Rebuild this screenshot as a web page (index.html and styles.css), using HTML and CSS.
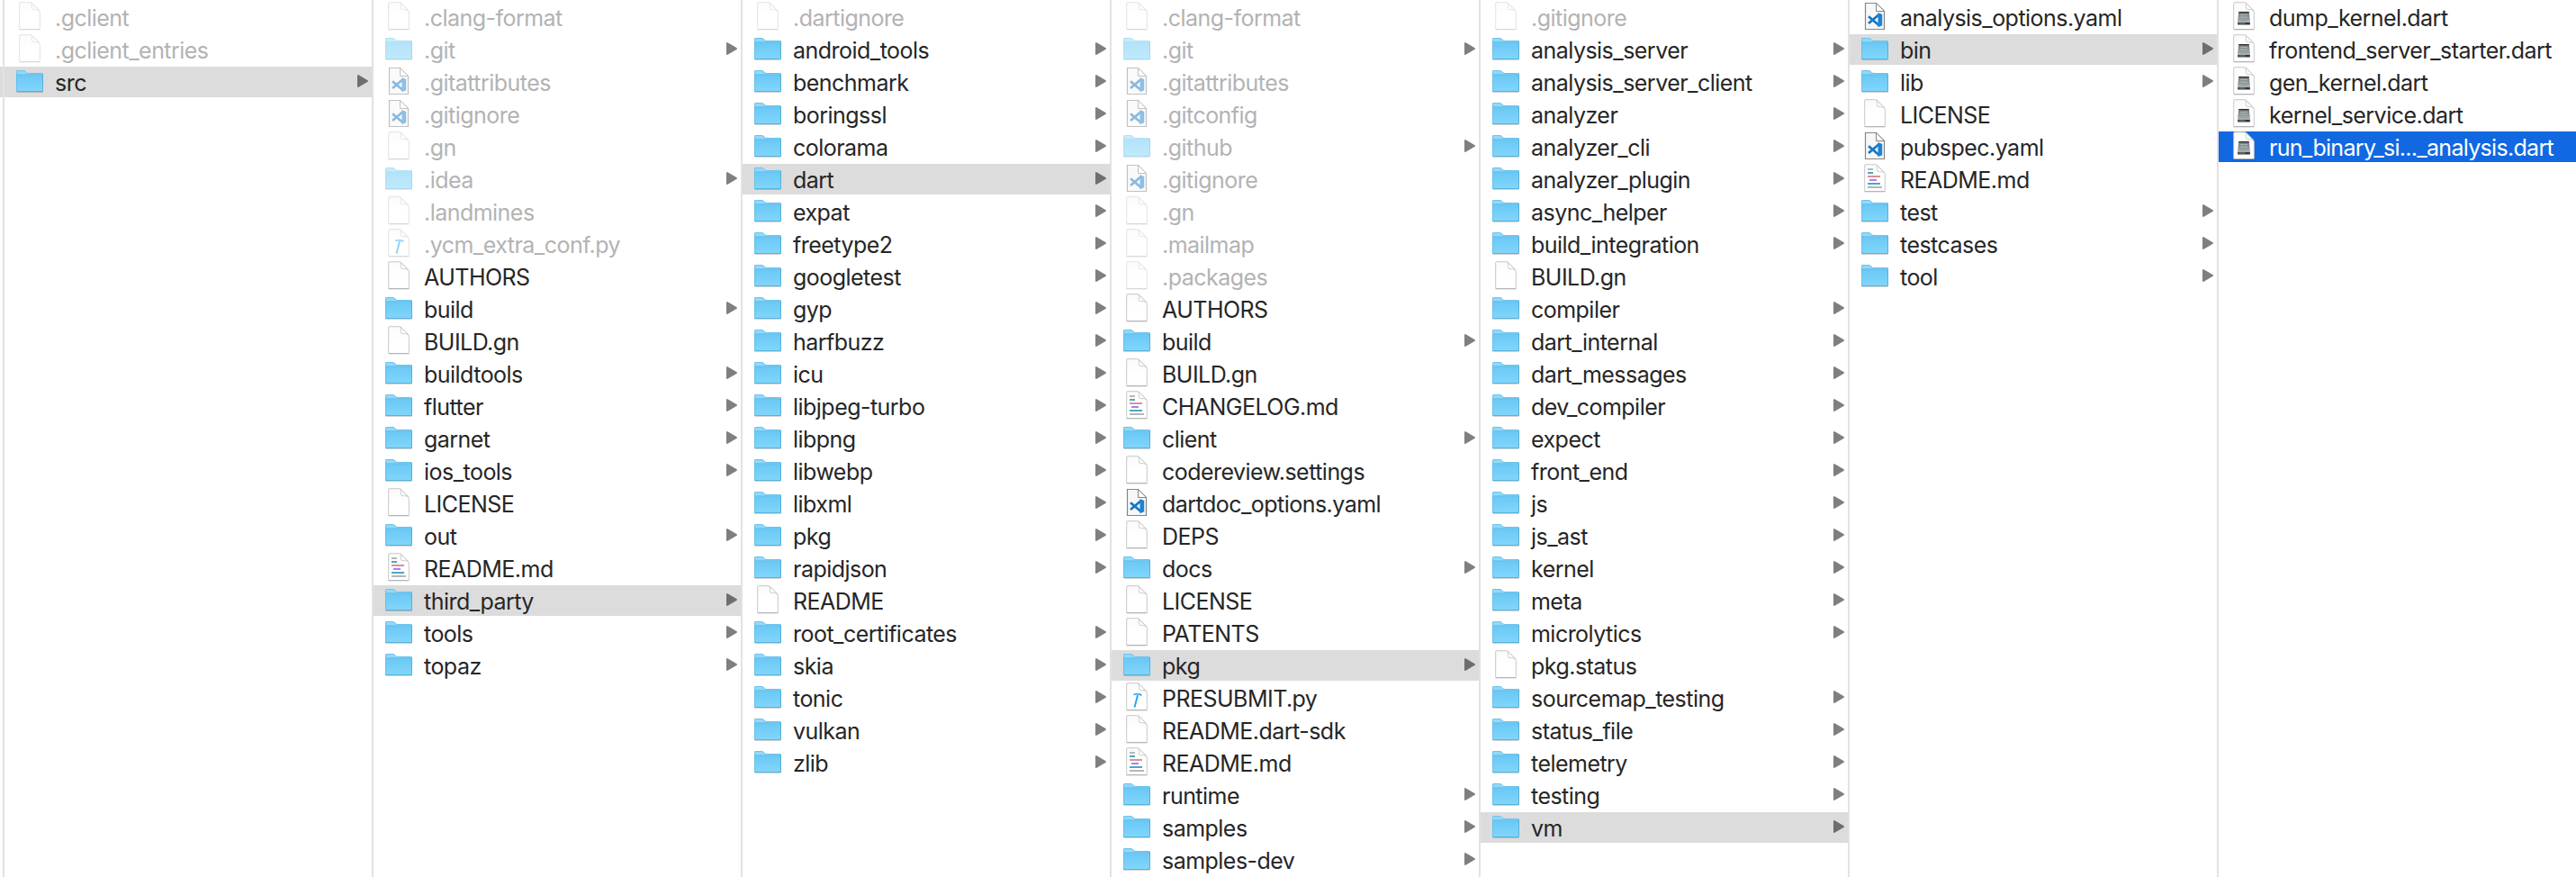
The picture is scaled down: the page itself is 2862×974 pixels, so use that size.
FILE: index.html
```html
<!DOCTYPE html>
<html lang="en">
<head>
<meta charset="utf-8">
<title>Files</title>
<link rel="stylesheet" href="styles.css">
</head>
<body>
<svg class="sprite" width="0" height="0" aria-hidden="true">
  <defs>
    <linearGradient id="gFolder" x1="0" y1="0" x2="0" y2="1"><stop offset="0" stop-color="#6ac8f5"/><stop offset="1" stop-color="#82d6fb"/></linearGradient>
    <linearGradient id="gPage" x1="0" y1="0" x2="0" y2="1"><stop offset="0" stop-color="#fafafa"/><stop offset=".5" stop-color="#fff"/></linearGradient>
    <linearGradient id="gDrive" x1="0" y1="0" x2="0" y2="1"><stop offset="0" stop-color="#70787b"/><stop offset="1" stop-color="#b4bbbd"/></linearGradient>
  </defs>
  <symbol id="folder" viewBox="0 0 34 34">
    <path d="M2.5 28.3h29" stroke="#000" stroke-opacity=".22" stroke-width="1"/>
    <path d="M2 27V5.2Q2 4 3.2 4h7.3q1 0 1.700.7l1.600 1.600q.7.7 1.700.7H31q1 0 1 1v19z" fill="#92d9f9"/>
    <path d="M2 9h30v18.200q0 .8-.8.8H2.800q-.8 0-.8-.8z" fill="url(#gFolder)"/>
    <path d="M2.500 27.500V5.500q0-1 1-1h7q.8 0 1.400.6l1.700 1.700q.7.7 1.700.7H31" fill="none" stroke="#5fb8e4" stroke-opacity=".7"/>
    <path d="M3 8.800h28.500" stroke="#5cb9e6" stroke-width=".8"/>
    <path d="M31.500 8v19.500h-29" fill="none" stroke="#4fa9d6" stroke-opacity=".8"/>
  </symbol>
  <symbol id="file" viewBox="0 0 34 34">
    <path d="M5.500 31.300h23" stroke="#000" stroke-opacity=".12"/>
    <path d="M5.700 1.700q0-1 1-1H17.500q1.500 0 2.600 1.100L27.200 9q1.100 1.200 1.100 2.600V29.500q0 1-1 1H6.700q-1 0-1-1z" fill="url(#gPage)" stroke="#c2c2c2" stroke-width=".9"/>
    <path d="M5.500 30.500h23" stroke="#b0b0b0" stroke-width=".8"/>
    <path d="M18.800 1.200q.9 1.200.7 5.800q0 1.500 1.500 1.500q5-.3 6.800 1.500z" fill="#fff" stroke="#c4c4c4" stroke-width=".8"/>
  </symbol>
  <symbol id="code" viewBox="0 0 34 34">
    <path d="M6.500 1.500H18.500L27.500 10.500V30.500H6.500z" fill="#f7f7f7" stroke="#858585" stroke-width="1.200"/>
    <path d="M18.500 1.500V10.500H27.500z" fill="#fff" stroke="#858585"/>
    <path d="M21.500 14.200L10 24M21.500 26L10 16.200" fill="none" stroke="#1478c6" stroke-width="2.800"/>
    <path d="M20.500 12l4.700 1.900v12.400l-4.700 1.900z" fill="#1b83d3"/>
  </symbol>
  <symbol id="script" viewBox="0 0 34 34">
    <use href="#file"/>
    <path d="M13.500 13.600q3-1.600 8-.2v1.400" fill="none" stroke="#1fa5f2" stroke-width="1.700"/>
    <path d="M18 14L14.500 27.500" stroke="#1fa5f2" stroke-width="1.900"/>
  </symbol>
  <symbol id="markdown" viewBox="0 0 34 34">
    <use href="#file"/>
    <path d="M9 6h6M9 26h16" stroke="#b5b8b8" stroke-width="2"/>
    <path d="M9 10h6M9 22h14" stroke="#52a8b6" stroke-width="2"/>
    <path d="M9 14h14" stroke="#de8f98" stroke-width="2"/>
    <path d="M11 18h8" stroke="#a881f5" stroke-width="2"/>
  </symbol>
  <symbol id="dart" viewBox="0 0 34 34">
    <use href="#file"/>
    <path d="M11.300 11h11.400l1.100 9v5.500H10.200V20z" fill="url(#gDrive)"/>
    <path d="M11.300 11.600h11.400" stroke="#2b2f31" stroke-width="1.300"/>
    <path d="M13 14.500h8M13 17h8" stroke="#cdd2d3" stroke-opacity=".6"/>
    <path d="M10.200 24.200h13.600" stroke="#33373a" stroke-width="2.400"/>
    <path d="M11.500 24h7" stroke="#8a9193" stroke-width=".9"/>
  </symbol>
</svg>
<main class="browser">
  <ul class="column">
    <li class="row dim"><svg class="icon"><use href="#file"/></svg>.gclient</li>
    <li class="row dim"><svg class="icon"><use href="#file"/></svg>.gclient_entries</li>
    <li class="row dir open"><svg class="icon"><use href="#folder"/></svg>src</li>
  </ul>
  <ul class="column">
    <li class="row dim"><svg class="icon"><use href="#file"/></svg>.clang-format</li>
    <li class="row dim dir"><svg class="icon"><use href="#folder"/></svg>.git</li>
    <li class="row dim"><svg class="icon"><use href="#code"/></svg>.gitattributes</li>
    <li class="row dim"><svg class="icon"><use href="#code"/></svg>.gitignore</li>
    <li class="row dim"><svg class="icon"><use href="#file"/></svg>.gn</li>
    <li class="row dim dir"><svg class="icon"><use href="#folder"/></svg>.idea</li>
    <li class="row dim"><svg class="icon"><use href="#file"/></svg>.landmines</li>
    <li class="row dim"><svg class="icon"><use href="#script"/></svg>.ycm_extra_conf.py</li>
    <li class="row"><svg class="icon"><use href="#file"/></svg>AUTHORS</li>
    <li class="row dir"><svg class="icon"><use href="#folder"/></svg>build</li>
    <li class="row"><svg class="icon"><use href="#file"/></svg>BUILD.gn</li>
    <li class="row dir"><svg class="icon"><use href="#folder"/></svg>buildtools</li>
    <li class="row dir"><svg class="icon"><use href="#folder"/></svg>flutter</li>
    <li class="row dir"><svg class="icon"><use href="#folder"/></svg>garnet</li>
    <li class="row dir"><svg class="icon"><use href="#folder"/></svg>ios_tools</li>
    <li class="row"><svg class="icon"><use href="#file"/></svg>LICENSE</li>
    <li class="row dir"><svg class="icon"><use href="#folder"/></svg>out</li>
    <li class="row"><svg class="icon"><use href="#markdown"/></svg>README.md</li>
    <li class="row dir open"><svg class="icon"><use href="#folder"/></svg>third_party</li>
    <li class="row dir"><svg class="icon"><use href="#folder"/></svg>tools</li>
    <li class="row dir"><svg class="icon"><use href="#folder"/></svg>topaz</li>
  </ul>
  <ul class="column">
    <li class="row dim"><svg class="icon"><use href="#file"/></svg>.dartignore</li>
    <li class="row dir"><svg class="icon"><use href="#folder"/></svg>android_tools</li>
    <li class="row dir"><svg class="icon"><use href="#folder"/></svg>benchmark</li>
    <li class="row dir"><svg class="icon"><use href="#folder"/></svg>boringssl</li>
    <li class="row dir"><svg class="icon"><use href="#folder"/></svg>colorama</li>
    <li class="row dir open"><svg class="icon"><use href="#folder"/></svg>dart</li>
    <li class="row dir"><svg class="icon"><use href="#folder"/></svg>expat</li>
    <li class="row dir"><svg class="icon"><use href="#folder"/></svg>freetype2</li>
    <li class="row dir"><svg class="icon"><use href="#folder"/></svg>googletest</li>
    <li class="row dir"><svg class="icon"><use href="#folder"/></svg>gyp</li>
    <li class="row dir"><svg class="icon"><use href="#folder"/></svg>harfbuzz</li>
    <li class="row dir"><svg class="icon"><use href="#folder"/></svg>icu</li>
    <li class="row dir"><svg class="icon"><use href="#folder"/></svg>libjpeg-turbo</li>
    <li class="row dir"><svg class="icon"><use href="#folder"/></svg>libpng</li>
    <li class="row dir"><svg class="icon"><use href="#folder"/></svg>libwebp</li>
    <li class="row dir"><svg class="icon"><use href="#folder"/></svg>libxml</li>
    <li class="row dir"><svg class="icon"><use href="#folder"/></svg>pkg</li>
    <li class="row dir"><svg class="icon"><use href="#folder"/></svg>rapidjson</li>
    <li class="row"><svg class="icon"><use href="#file"/></svg>README</li>
    <li class="row dir"><svg class="icon"><use href="#folder"/></svg>root_certificates</li>
    <li class="row dir"><svg class="icon"><use href="#folder"/></svg>skia</li>
    <li class="row dir"><svg class="icon"><use href="#folder"/></svg>tonic</li>
    <li class="row dir"><svg class="icon"><use href="#folder"/></svg>vulkan</li>
    <li class="row dir"><svg class="icon"><use href="#folder"/></svg>zlib</li>
  </ul>
  <ul class="column">
    <li class="row dim"><svg class="icon"><use href="#file"/></svg>.clang-format</li>
    <li class="row dim dir"><svg class="icon"><use href="#folder"/></svg>.git</li>
    <li class="row dim"><svg class="icon"><use href="#code"/></svg>.gitattributes</li>
    <li class="row dim"><svg class="icon"><use href="#code"/></svg>.gitconfig</li>
    <li class="row dim dir"><svg class="icon"><use href="#folder"/></svg>.github</li>
    <li class="row dim"><svg class="icon"><use href="#code"/></svg>.gitignore</li>
    <li class="row dim"><svg class="icon"><use href="#file"/></svg>.gn</li>
    <li class="row dim"><svg class="icon"><use href="#file"/></svg>.mailmap</li>
    <li class="row dim"><svg class="icon"><use href="#file"/></svg>.packages</li>
    <li class="row"><svg class="icon"><use href="#file"/></svg>AUTHORS</li>
    <li class="row dir"><svg class="icon"><use href="#folder"/></svg>build</li>
    <li class="row"><svg class="icon"><use href="#file"/></svg>BUILD.gn</li>
    <li class="row"><svg class="icon"><use href="#markdown"/></svg>CHANGELOG.md</li>
    <li class="row dir"><svg class="icon"><use href="#folder"/></svg>client</li>
    <li class="row"><svg class="icon"><use href="#file"/></svg>codereview.settings</li>
    <li class="row"><svg class="icon"><use href="#code"/></svg>dartdoc_options.yaml</li>
    <li class="row"><svg class="icon"><use href="#file"/></svg>DEPS</li>
    <li class="row dir"><svg class="icon"><use href="#folder"/></svg>docs</li>
    <li class="row"><svg class="icon"><use href="#file"/></svg>LICENSE</li>
    <li class="row"><svg class="icon"><use href="#file"/></svg>PATENTS</li>
    <li class="row dir open"><svg class="icon"><use href="#folder"/></svg>pkg</li>
    <li class="row"><svg class="icon"><use href="#script"/></svg>PRESUBMIT.py</li>
    <li class="row"><svg class="icon"><use href="#file"/></svg>README.dart-sdk</li>
    <li class="row"><svg class="icon"><use href="#markdown"/></svg>README.md</li>
    <li class="row dir"><svg class="icon"><use href="#folder"/></svg>runtime</li>
    <li class="row dir"><svg class="icon"><use href="#folder"/></svg>samples</li>
    <li class="row dir"><svg class="icon"><use href="#folder"/></svg>samples-dev</li>
  </ul>
  <ul class="column">
    <li class="row dim"><svg class="icon"><use href="#file"/></svg>.gitignore</li>
    <li class="row dir"><svg class="icon"><use href="#folder"/></svg>analysis_server</li>
    <li class="row dir"><svg class="icon"><use href="#folder"/></svg>analysis_server_client</li>
    <li class="row dir"><svg class="icon"><use href="#folder"/></svg>analyzer</li>
    <li class="row dir"><svg class="icon"><use href="#folder"/></svg>analyzer_cli</li>
    <li class="row dir"><svg class="icon"><use href="#folder"/></svg>analyzer_plugin</li>
    <li class="row dir"><svg class="icon"><use href="#folder"/></svg>async_helper</li>
    <li class="row dir"><svg class="icon"><use href="#folder"/></svg>build_integration</li>
    <li class="row"><svg class="icon"><use href="#file"/></svg>BUILD.gn</li>
    <li class="row dir"><svg class="icon"><use href="#folder"/></svg>compiler</li>
    <li class="row dir"><svg class="icon"><use href="#folder"/></svg>dart_internal</li>
    <li class="row dir"><svg class="icon"><use href="#folder"/></svg>dart_messages</li>
    <li class="row dir"><svg class="icon"><use href="#folder"/></svg>dev_compiler</li>
    <li class="row dir"><svg class="icon"><use href="#folder"/></svg>expect</li>
    <li class="row dir"><svg class="icon"><use href="#folder"/></svg>front_end</li>
    <li class="row dir"><svg class="icon"><use href="#folder"/></svg>js</li>
    <li class="row dir"><svg class="icon"><use href="#folder"/></svg>js_ast</li>
    <li class="row dir"><svg class="icon"><use href="#folder"/></svg>kernel</li>
    <li class="row dir"><svg class="icon"><use href="#folder"/></svg>meta</li>
    <li class="row dir"><svg class="icon"><use href="#folder"/></svg>microlytics</li>
    <li class="row"><svg class="icon"><use href="#file"/></svg>pkg.status</li>
    <li class="row dir"><svg class="icon"><use href="#folder"/></svg>sourcemap_testing</li>
    <li class="row dir"><svg class="icon"><use href="#folder"/></svg>status_file</li>
    <li class="row dir"><svg class="icon"><use href="#folder"/></svg>telemetry</li>
    <li class="row dir"><svg class="icon"><use href="#folder"/></svg>testing</li>
    <li class="row dir open"><svg class="icon"><use href="#folder"/></svg>vm</li>
  </ul>
  <ul class="column">
    <li class="row"><svg class="icon"><use href="#code"/></svg>analysis_options.yaml</li>
    <li class="row dir open"><svg class="icon"><use href="#folder"/></svg>bin</li>
    <li class="row dir"><svg class="icon"><use href="#folder"/></svg>lib</li>
    <li class="row"><svg class="icon"><use href="#file"/></svg>LICENSE</li>
    <li class="row"><svg class="icon"><use href="#code"/></svg>pubspec.yaml</li>
    <li class="row"><svg class="icon"><use href="#markdown"/></svg>README.md</li>
    <li class="row dir"><svg class="icon"><use href="#folder"/></svg>test</li>
    <li class="row dir"><svg class="icon"><use href="#folder"/></svg>testcases</li>
    <li class="row dir"><svg class="icon"><use href="#folder"/></svg>tool</li>
  </ul>
  <ul class="column">
    <li class="row"><svg class="icon"><use href="#dart"/></svg>dump_kernel.dart</li>
    <li class="row"><svg class="icon"><use href="#dart"/></svg>frontend_server_starter.dart</li>
    <li class="row"><svg class="icon"><use href="#dart"/></svg>gen_kernel.dart</li>
    <li class="row"><svg class="icon"><use href="#dart"/></svg>kernel_service.dart</li>
    <li class="row selected"><svg class="icon"><use href="#dart"/></svg>run_binary_si..._analysis.dart</li>
  </ul>
</main>
</body>
</html>
```
FILE: styles.css
```css
body {
  margin: 0;
  background: #fff;
  overflow: hidden;
}

.sprite {
  display: block;
}

/* The strip left of the first divider belongs to the scrolled-off column. */
.browser {
  display: flex;
  height: 974px;
  padding-left: 3px;
  overflow: hidden;
  background: linear-gradient(#dcdcdc, #dcdcdc) 0 74px / 3px 34px no-repeat;
  font-family: Inter, "Noto Sans", sans-serif;
  font-size: 25px;
  line-height: 36px;
  letter-spacing: -.53px;
  color: #262626;
}

.column {
  flex: none;
  box-sizing: border-box;
  width: 410px;
  margin: 0;
  padding: 2px 0 0;
  border-left: 2px solid #e2e2e2;
  list-style: none;
}

.row {
  display: flex;
  align-items: flex-start;
  height: 34px;
  margin-bottom: 2px;
  padding: 0 4px 0 11px;
  white-space: nowrap;
}

.icon {
  flex: none;
  width: 34px;
  height: 34px;
  margin-right: 11px;
}

.dim {
  color: #b3b3b3;
}

.dim .icon {
  opacity: .5;
}

.dir::after {
  content: "";
  width: 12px;
  height: 14px;
  margin-left: auto;
  margin-top: 9px;
  background: #7f7f7f;
  clip-path: polygon(0 5%, 5% 0, 12% 1%, 97% 44%, 100% 50%, 97% 56%, 12% 99%, 5% 100%, 0 95%);
}

.open {
  background: #dcdcdc;
}

.open::after {
  background: #6e6e6e;
}

.selected {
  background: #1168e1;
  color: #fff;
  letter-spacing: -.7px;
}
```
